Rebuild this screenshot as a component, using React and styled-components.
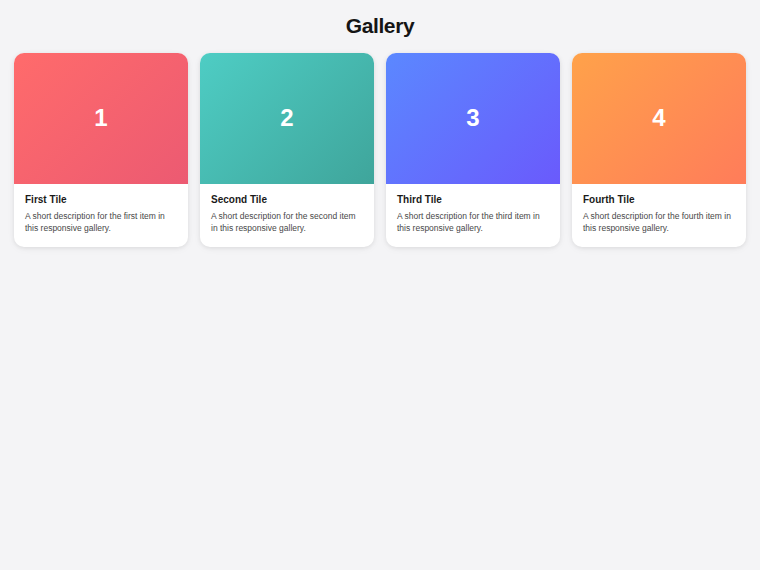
import React from 'react';
import styled, { createGlobalStyle } from 'styled-components';

const GlobalStyle = createGlobalStyle`
	* {
		box-sizing: border-box;
	}
	body {
		margin: 0;
		background: #f4f4f6;
		font-family: 'Liberation Sans', Arial, sans-serif;
		color: #1a1a1a;
	}
`;

const Page = styled.main`
	padding: 14px;
`;

const Title = styled.h1`
	margin: 0 0 15px;
	font-size: 21px;
	line-height: 24px;
	font-weight: 700;
	letter-spacing: -0.4px;
	text-align: center;
	color: #151515;
`;

const Grid = styled.div`
	display: grid;
	grid-template-columns: repeat(4, 1fr);
	gap: 12px;
`;

const Card = styled.article`
	background: #fff;
	border-radius: 10px;
	overflow: hidden;
	box-shadow: 0 1px 4px rgba(0, 0, 0, 0.08), 0 2px 8px rgba(0, 0, 0, 0.04);
`;

const Thumb = styled.div`
	aspect-ratio: 4 / 3;
	display: flex;
	align-items: center;
	justify-content: center;
	background: linear-gradient(135deg, ${p => p.from}, ${p => p.to});
	color: #fff;
	font-size: 24px;
	font-weight: 700;
`;

const Body = styled.div`
	padding: 9px 11px 12px;
`;

const TileName = styled.h2`
	margin: 0 0 4px;
	font-size: 10px;
	line-height: 13px;
	font-weight: 700;
	color: #1a1a1a;
`;

const Desc = styled.p`
	margin: 0;
	font-size: 8.5px;
	line-height: 12.5px;
	color: #484848;
`;

const tiles = [
	{ n: 1, name: 'First Tile', word: 'first', from: '#ff6b6b', to: '#ec5a72' },
	{ n: 2, name: 'Second Tile', word: 'second', from: '#4ecdc4', to: '#3fa59b' },
	{ n: 3, name: 'Third Tile', word: 'third', from: '#5b88ff', to: '#6a5afc' },
	{ n: 4, name: 'Fourth Tile', word: 'fourth', from: '#ffa24a', to: '#ff7c5a' },
];

const App = () => (
	<>
		<GlobalStyle />
		<Page>
			<Title>Gallery</Title>
			<Grid>
				{tiles.map(t => (
					<Card key={t.n}>
						<Thumb from={t.from} to={t.to}>{t.n}</Thumb>
						<Body>
							<TileName>{t.name}</TileName>
							<Desc>{`A short description for the ${t.word} item in this responsive gallery.`}</Desc>
						</Body>
					</Card>
				))}
			</Grid>
		</Page>
	</>
);

export default App;
